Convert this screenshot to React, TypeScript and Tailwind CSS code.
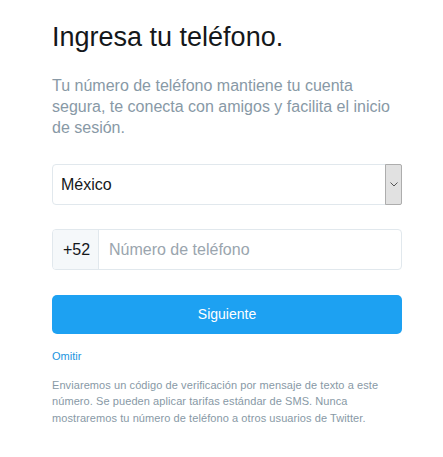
import React from "react";

export default function App() {
  return (
    <div
      className="min-h-[457px] w-[443px] bg-white pl-[52px] pt-[21px]"
      style={{ fontFamily: '"Liberation Sans", Arial, sans-serif' }}
    >
      <div className="flex w-[350px] flex-col">
        <h1 className="text-[27px] leading-[32px] font-normal text-[#14171a]">
          Ingresa tu teléfono.
        </h1>
        <p className="mt-[22px] text-[16px] leading-[21px] text-[#8899a6]">
          Tu número de teléfono mantiene tu cuenta segura, te conecta con amigos y facilita el inicio de sesión.
        </p>

        <div className="mt-[26px] flex h-[41px] items-stretch rounded-[4px] border border-[#e1e8ed] bg-white">
          <div className="flex flex-1 items-center pl-[8px] text-[16px] text-[#14171a]">
            México
          </div>
          <div className="-my-px -mr-px flex w-[17px] items-center justify-center rounded-r-[2px] border border-[#adadad] bg-[#e1e1e1]">
            <svg width="8" height="5" viewBox="0 0 8 5" fill="none">
              <path d="M0.5 0.5 L4 4 L7.5 0.5" stroke="#555" strokeWidth="1" />
            </svg>
          </div>
        </div>

        <div className="mt-[24px] flex h-[41px] items-stretch overflow-hidden rounded-[4px] border border-[#e1e8ed] bg-white">
          <div className="flex w-[46px] items-center border-r border-[#e1e8ed] bg-[#f5f8fa] pl-[10px] text-[16px] text-[#14171a]">
            +52
          </div>
          <div className="flex flex-1 items-center pl-[10px] text-[16px] text-[#9aa5ae]">
            Número de teléfono
          </div>
        </div>

        <button className="mt-[25px] flex h-[39px] items-center justify-center rounded-[5px] bg-[#1da1f2] text-[14px] text-white">
          Siguiente
        </button>

        <a className="mt-[14px] text-[11px] leading-[16.5px] text-[#1b95e0]">Omitir</a>

        <p className="mt-[12px] text-[11px] leading-[16.5px] tracking-[0.08px] text-[#8899a6]">
          Enviaremos un código de verificación por mensaje de texto a este número. Se pueden aplicar tarifas estándar de SMS. Nunca mostraremos tu número de teléfono a otros usuarios de Twitter.
        </p>
      </div>
    </div>
  );
}
